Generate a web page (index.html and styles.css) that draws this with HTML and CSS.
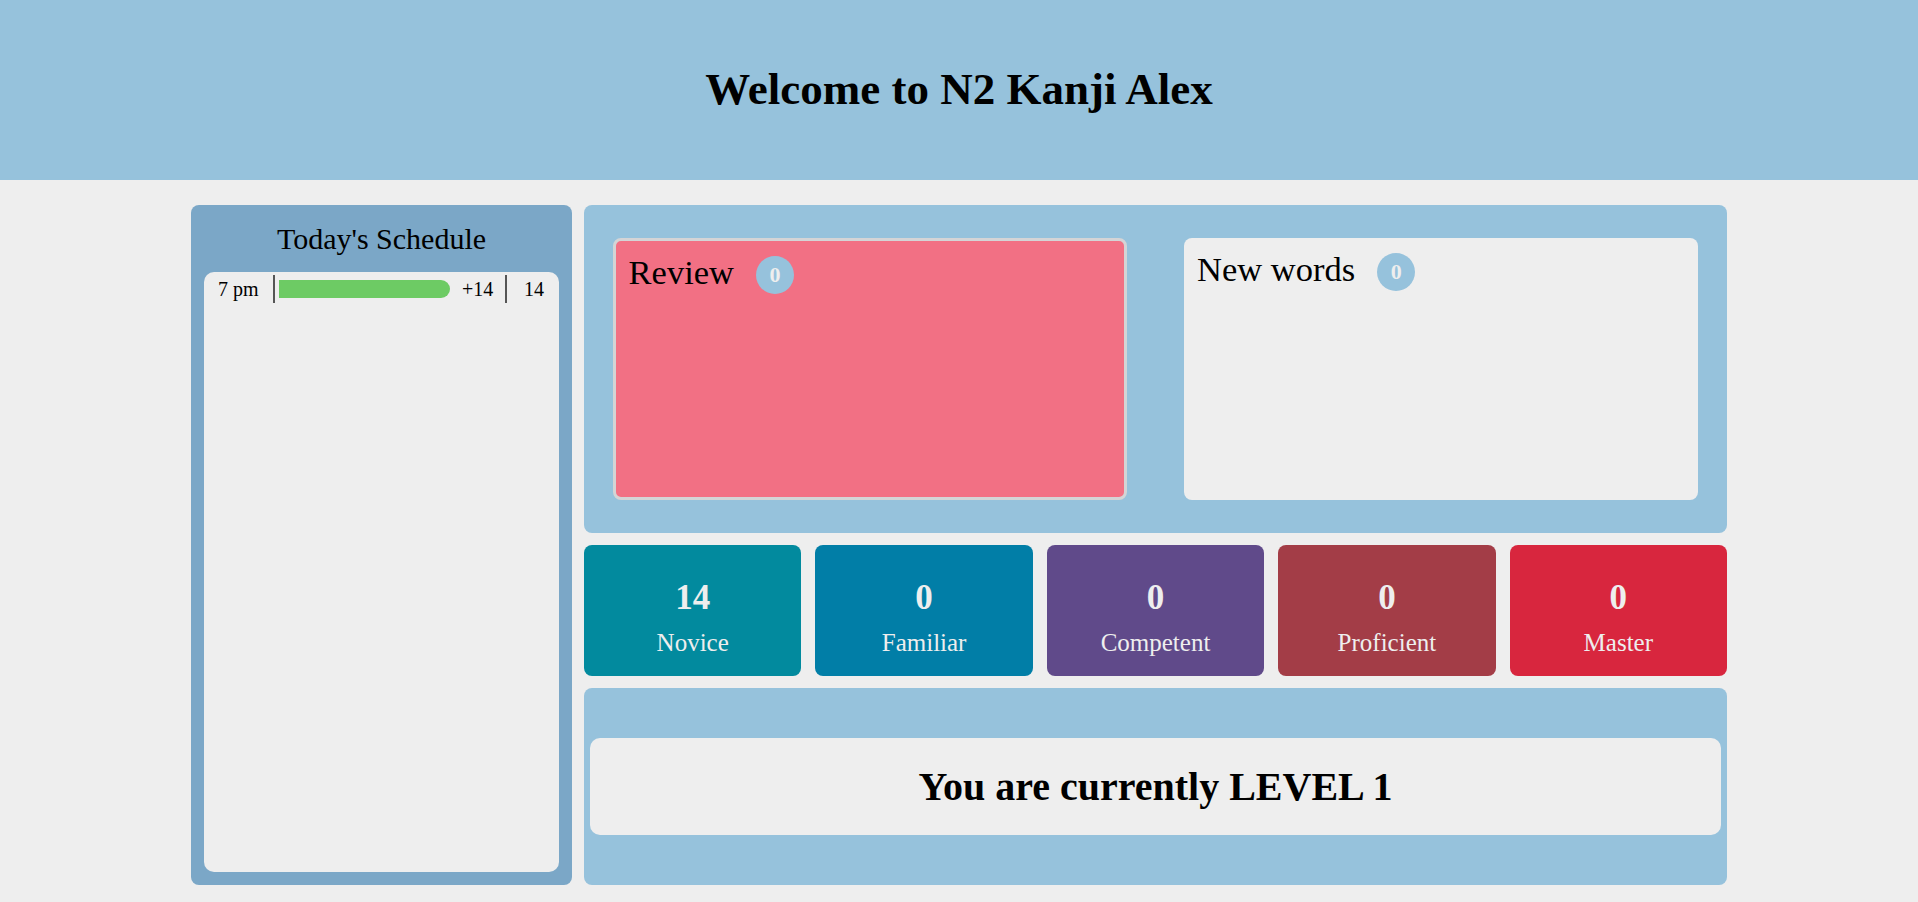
FILE: index.html
```html
<!DOCTYPE html>
<html lang="en">
<head>
<meta charset="utf-8">
<title>N2 Kanji</title>
<link rel="stylesheet" href="styles.css">
</head>
<body>
<header class="header">
  <h1 class="title">Welcome to N2 Kanji Alex</h1>
</header>
<main class="main">
  <aside class="schedule">
    <div class="schedule-title">Today's Schedule</div>
    <div class="schedule-body">
      <div class="sched-row">
        <span class="sched-time">7 pm</span>
        <span class="sched-sep"></span>
        <span class="sched-track"><span class="sched-fill" style="width:171px"></span></span>
        <span class="sched-plus">+14</span>
        <span class="sched-sep sep2"></span>
        <span class="sched-total">14</span>
      </div>
    </div>
  </aside>
  <section class="right">
    <div class="top-panel">
      <div class="card card-review">
        <div class="card-head">
          <span class="card-title">Review</span>
          <span class="badge">0</span>
        </div>
      </div>
      <div class="card card-new">
        <div class="card-head">
          <span class="card-title">New words</span>
          <span class="badge">0</span>
        </div>
      </div>
    </div>
    <div class="stats">
      <div class="stat novice"><div class="stat-num">14</div><div class="stat-label">Novice</div></div>
      <div class="stat familiar"><div class="stat-num">0</div><div class="stat-label">Familiar</div></div>
      <div class="stat competent"><div class="stat-num">0</div><div class="stat-label">Competent</div></div>
      <div class="stat proficient"><div class="stat-num">0</div><div class="stat-label">Proficient</div></div>
      <div class="stat master"><div class="stat-num">0</div><div class="stat-label">Master</div></div>
    </div>
    <div class="level-panel">
      <div class="level-box">You are currently LEVEL 1</div>
    </div>
  </section>
</main>
</body>
</html>
```
FILE: styles.css
```css
* { box-sizing: border-box; }
html, body { margin: 0; padding: 0; }
body {
  background: #eeeeee;
  font-family: "Liberation Serif", "Times New Roman", serif;
  color: #000;
  height: 902px;
  overflow: hidden;
}
.header {
  height: 180px;
  background: #96c2dc;
  padding-top: 66px;
  text-align: center;
}
.title {
  margin: 0;
  font-size: 45px;
  line-height: 46px;
  font-weight: bold;
}
.main {
  display: flex;
  gap: 12px;
  width: 1536px;
  margin: 25px auto 0;
  height: 680px;
}
.schedule {
  width: 381px;
  flex: none;
  background: #7ba7c7;
  border-radius: 8px;
  padding: 0 13px 13px;
  display: flex;
  flex-direction: column;
}
.schedule-title {
  padding: 19px 0 18px;
  font-size: 30px;
  line-height: 30px;
  text-align: center;
}
.schedule-body {
  flex: 1;
  background: #eeeeee;
  border-radius: 10px;
  padding-top: 3px;
}
.sched-row {
  display: flex;
  align-items: center;
  height: 28px;
  font-size: 20px;
  line-height: 20px;
  white-space: nowrap;
}
.sched-row > span { flex: none; }
.sched-time { margin-left: 14px; width: 41px; }
.sched-sep {
  width: 2px;
  height: 28px;
  background: #555555;
  margin-left: 14px;
}
.sched-track { margin-left: 4px; width: 171px; height: 18px; display: flex; }
.sched-fill {
  height: 18px;
  background: #6dcb64;
  border-radius: 0 9px 9px 0;
}
.sched-plus { margin-left: 12px; width: 32px; }
.sep2 { margin-left: 11px; }
.sched-total { margin-left: 17px; }
.right {
  width: 1143px;
  flex: none;
  display: flex;
  flex-direction: column;
  gap: 12px;
}
.top-panel {
  height: 328px;
  background: #96c2dc;
  border-radius: 8px;
  display: flex;
  justify-content: space-around;
  align-items: center;
}
.card {
  width: 45%;
  height: 80%;
  border-radius: 8px;
  padding: 15px 13px;
}
.card-review {
  background: #f27084;
  border: 3px solid #d4d4d6;
}
.card-new { background: #eeeeee; }
.card-head {
  display: flex;
  align-items: flex-start;
  gap: 22px;
}
.card-title {
  font-size: 34.5px;
  line-height: 33px;
}
.badge {
  width: 38px;
  height: 38px;
  border-radius: 50%;
  background: #96c2dc;
  color: #eeeeee;
  font-weight: bold;
  font-size: 22px;
  display: flex;
  align-items: center;
  justify-content: center;
}
.stats {
  height: 131px;
  display: grid;
  grid-template-columns: repeat(5, 1fr);
  gap: 14px;
}
.stat {
  border-radius: 8px;
  color: #eeeeee;
  text-align: center;
  padding-top: 35px;
}
.stat-num {
  font-size: 35px;
  line-height: 35px;
  font-weight: bold;
}
.stat-label {
  margin-top: 15px;
  font-size: 25px;
  line-height: 25px;
}
.novice { background: #028a9e; }
.familiar { background: #017ea7; }
.competent { background: #604a8a; }
.proficient { background: #a33d47; }
.master { background: #d8263e; }
.level-panel {
  flex: 1;
  background: #96c2dc;
  border-radius: 8px;
  padding: 0 6px;
  display: flex;
  align-items: center;
}
.level-box {
  flex: 1;
  height: 97px;
  background: #eeeeee;
  border-radius: 10px;
  display: flex;
  align-items: center;
  justify-content: center;
  font-size: 40px;
  line-height: 40px;
  font-weight: bold;
}
```
